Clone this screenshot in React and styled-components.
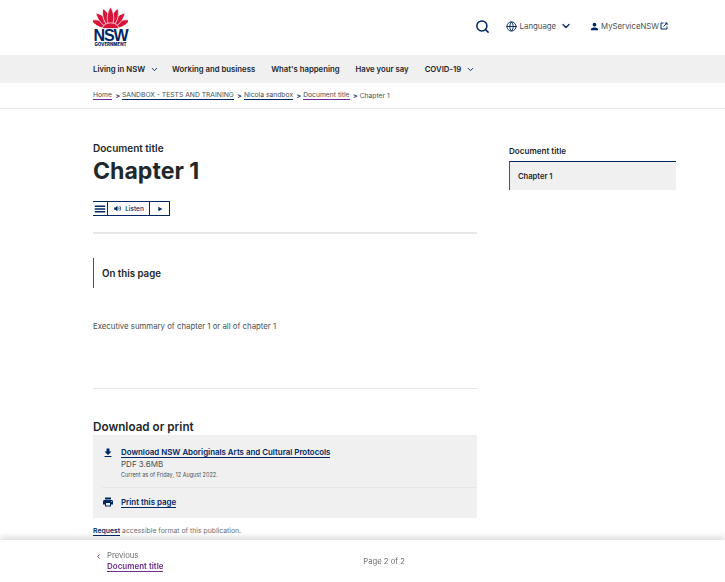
import React from 'react';
import styled, { createGlobalStyle } from 'styled-components';
import { Search, Globe, ChevronDown, ChevronLeft } from 'lucide-react';

const navy = '#002664';
const GlobalStyle = createGlobalStyle`
  html, body { margin: 0; padding: 0; height: 100%; overflow: hidden; background: #fff; }
  body { font-family: "Inter", "Liberation Sans", sans-serif; color: #22272b; }
  * { box-sizing: border-box; }
`;

const Page = styled.div`
  height: 582px;
  overflow: hidden;
`;

const Header = styled.header`
  height: 55px;
  padding: 6px 57px 0 93px;
  display: flex;
  justify-content: space-between;
`;

const Logo = styled.div`
  width: 35px;
  display: flex;
  flex-direction: column;
  align-items: center;
  color: ${navy};
`;

const LogoName = styled.span`
  font-family: "Liberation Sans", sans-serif;
  font-size: 16px;
  font-weight: 700;
  line-height: 13px;
  letter-spacing: -1.1px;
`;

const LogoGov = styled.span`
  font-size: 4.4px;
  font-weight: 800;
  line-height: 5px;
  white-space: nowrap;
`;

const Tools = styled.div`
  display: flex;
  align-items: center;
  height: 40px;
  color: ${navy};
  font-size: 7.8px;
`;

const ToolLabel = styled.span`
  color: #495054;
  margin-left: ${p => p.$gap || 3}px;
`;

const Language = styled.div`
  display: flex;
  align-items: center;
  margin-left: 16px;
  margin-right: 17px;
`;

const LanguageChevron = styled(ChevronDown)`
  margin-left: 4px;
`;

const Account = styled.div`
  display: flex;
  align-items: center;
`;

const ExternalSlot = styled.span`
  display: flex;
  margin-left: 1px;
`;

const Nav = styled.nav`
  height: 28px;
  background: #f0f0f0;
  padding-left: 93px;
  display: flex;
  align-items: center;
  gap: 16px;
`;

const NavItem = styled.a`
  display: flex;
  align-items: center;
  gap: 5px;
  font-size: 7.75px;
  font-weight: 600;
  color: #22272b;
  white-space: nowrap;
`;

const NavChevron = styled(ChevronDown)`
  margin-right: -3px;
`;

const Crumbs = styled.div`
  height: 26px;
  border-bottom: 1px solid #e8e8e8;
  padding-left: 93px;
  display: flex;
  align-items: center;
  font-size: 6.75px;
  color: #495054;
`;

const Crumb = styled.a`
  color: #495054;
  border-bottom: 1px solid ${p => (p.$visited ? '#6a2c91' : navy)};
  line-height: 8px;
  white-space: nowrap;
`;

const Sep = styled.span`
  margin: 0 2px 0 3.5px;
  color: ${navy};
  font-weight: 700;
`;

const Columns = styled.div`
  display: flex;
  padding-left: 93px;
  gap: 32px;
`;

const Main = styled.main`
  width: 384px;
  padding-top: 32px;
`;

const Eyebrow = styled.div`
  font-size: 10px;
  font-weight: 600;
  line-height: 14px;
`;

const Title = styled.h1`
  margin: 2px 0 0;
  font-size: 23.1px;
  font-weight: 700;
  line-height: 29px;
`;

const Player = styled.div`
  display: inline-flex;
  vertical-align: top;
  margin-top: 15px;
  height: 15px;
  border: 1px solid ${navy};
  border-left: 0;
  color: ${navy};
`;

const PlayerCell = styled.div`
  display: flex;
  align-items: center;
  justify-content: center;
  gap: 3px;
  width: ${p => p.$w}px;
  border-left: ${p => (p.$plain ? 0 : `1px solid ${navy}`)};
  font-size: 6.5px;
  font-weight: 500;
  color: ${navy};
`;

const Rule = styled.hr`
  margin: ${p => p.$m || '16px 0 0'};
  border: 0;
  height: ${p => p.$h || 2}px;
  background: #e8e8e8;
`;

const OnPage = styled.div`
  margin-top: 24px;
  height: 30px;
  border-left: 1px solid #d7153a;
  padding-left: 8px;
  display: flex;
  align-items: center;
  font-size: 9.7px;
  font-weight: 600;
`;

const Summary = styled.p`
  margin: 32px 0 0;
  font-size: 7.8px;
  line-height: 12px;
  color: #495054;
`;

const SectionTitle = styled.h2`
  margin: 31px 0 0;
  font-size: 11.7px;
  font-weight: 600;
  line-height: 15px;
`;

const DownloadBox = styled.div`
  height: 83px;
  background: #f0f0f0;
  padding: 13px 0 0 9px;
`;

const DownloadRow = styled.div`
  display: flex;
  gap: 7px;
  padding-bottom: 8px;
  border-bottom: ${p => (p.$line ? '1px solid #e6e6e6' : 0)};
  margin-bottom: 10px;
  color: ${navy};
`;

const IconSlot = styled.div`
  width: 12px;
  display: flex;
  justify-content: center;
  margin-top: ${p => p.$top}px;
`;

const BoxLink = styled.a`
  display: block;
  width: fit-content;
  font-size: 7.9px;
  font-weight: 600;
  color: ${navy};
  border-bottom: 1px solid ${navy};
  line-height: 9px;
  white-space: nowrap;
`;

const FileSize = styled.div`
  font-size: 8px;
  line-height: 10px;
  margin-top: 1px;
  color: #495054;
`;

const Stamp = styled.div`
  font-size: 5.5px;
  line-height: 8px;
  margin-top: 2px;
  color: #495054;
`;

const RequestLine = styled.p`
  margin: 8px 0 0;
  font-size: 6.85px;
  line-height: 9px;
  color: #6d6f72;
`;

const RequestLink = styled.a`
  font-weight: 600;
  color: ${navy};
  border-bottom: 1px solid ${navy};
`;

const Side = styled.aside`
  width: 167px;
  padding-top: 37px;
`;

const SideTitle = styled.div`
  font-size: 8.1px;
  font-weight: 600;
  line-height: 11px;
  margin-bottom: 4px;
`;

const SideItem = styled.div`
  height: 29px;
  background: #f0f0f0;
  border-top: 1px solid ${navy};
  border-left: 1px solid #d7153a;
  padding-left: 8px;
  display: flex;
  align-items: center;
  font-size: 7.6px;
  font-weight: 600;
`;

const Footer = styled.footer`
  position: fixed;
  left: 0;
  right: 0;
  bottom: 0;
  height: 42px;
  background: #fff;
  box-shadow: 0 -3px 6px rgba(0, 0, 0, 0.14);
  padding: 10px 320px 0 95px;
  display: flex;
  justify-content: space-between;
`;

const Prev = styled.div`
  font-size: 7.7px;
  line-height: 12px;
  color: #6d6f72;
`;

const PrevLabel = styled.div`
  display: flex;
  align-items: center;
  gap: 5px;
`;

const PrevLink = styled.a`
  display: block;
  width: fit-content;
  margin-left: 12px;
  font-size: 8px;
  font-weight: 600;
  color: #6a2c91;
  border-bottom: 1px solid #6a2c91;
  line-height: 9px;
`;

const PageCount = styled.div`
  font-size: 7.7px;
  color: #6d6f72;
  margin-top: 7px;
`;

const Solid = ({ d, size }) => (
  <svg width={size} height={size} viewBox="0 0 24 24" fill="currentColor"><path d={d} /></svg>
);

const icons = {
  download: 'M19 9h-4V3H9v6H5l7 7 7-7zM5 18v2h14v-2H5z',
  print: 'M19 8H5c-1.66 0-3 1.34-3 3v6h4v4h12v-4h4v-6c0-1.66-1.34-3-3-3zm-3 11H8v-5h8v5zm3-7c-.55 0-1-.45-1-1s.45-1 1-1 1 .45 1 1-.45 1-1 1zm-1-9H6v4h12V3z',
  menu: 'M3 18h18v-2.400H3V18zm0-4.800h18v-2.400H3v2.400zM3 6v2.400h18V6H3z',
  person: 'M12 12c2.210 0 4-1.790 4-4s-1.790-4-4-4-4 1.790-4 4 1.790 4 4 4zm0 2c-2.670 0-8 1.340-8 4v2h16v-2c0-2.660-5.330-4-8-4z',
  speaker: 'M3 9v6h4l5 5V4L7 9H3z',
  play: 'M7 5v14l12-7z',
};

const SpeakerWaves = () => (
  <svg width="9" height="9" viewBox="0 0 24 24" fill="none" stroke="currentColor" strokeWidth="2.4">
    <path d={icons.speaker} fill="currentColor" stroke="none" />
    <path d="M15 9c1.400 1.600 1.400 4.400 0 6M18 6c3 3.400 3 8.600 0 12" />
  </svg>
);

const ExternalBox = () => (
  <svg width="8" height="8" viewBox="0 0 8 8" fill="none" stroke="currentColor" strokeWidth="1">
    <path d="M3.500 1H1v6h6V4.500M3.500 4.500L7 1M4.800 1H7v2.200" />
  </svg>
);

const petalAngles = [-68, 68, -44, 44, -21, 21, 0];

const Waratah = () => (
  <svg width="35" height="23" viewBox="0 0 35 23">
    {petalAngles.map(a => (
      <path key={a} d="M17.500 22 C12.800 16 13.500 7 17.500 1 C21.500 7 22.200 16 17.500 22Z" fill="#d7153a" stroke="#fff" strokeWidth="0.7" transform={`rotate(${a} 17.500 22)`} />
    ))}
    <path d="M9 22.500 C11 15 24 15 26 22.500Z" fill="#d7153a" stroke="#fff" strokeWidth="0.7" />
  </svg>
);

const App = () => (
  <Page>
    <GlobalStyle />
    <Header>
      <Logo>
        <Waratah />
        <LogoName>NSW</LogoName>
        <LogoGov>GOVERNMENT</LogoGov>
      </Logo>
      <Tools>
        <Search size={15} strokeWidth={2.4} />
        <Language>
          <Globe size={11} />
          <ToolLabel>Language</ToolLabel>
          <LanguageChevron size={12} strokeWidth={2.5} />
        </Language>
        <Account>
          <Solid d={icons.person} size={11} />
          <ToolLabel $gap={1}>MyServiceNSW</ToolLabel>
          <ExternalSlot><ExternalBox /></ExternalSlot>
        </Account>
      </Tools>
    </Header>
    <Nav>
      <NavItem>Living in NSW <NavChevron size={9} color={navy} strokeWidth={2.5} /></NavItem>
      <NavItem>Working and business</NavItem>
      <NavItem>What's happening</NavItem>
      <NavItem>Have your say</NavItem>
      <NavItem>COVID-19 <NavChevron size={9} color={navy} strokeWidth={2.5} /></NavItem>
    </Nav>
    <Crumbs>
      <Crumb $visited>Home</Crumb><Sep>&gt;</Sep>
      <Crumb>SANDBOX - TESTS AND TRAINING</Crumb><Sep>&gt;</Sep>
      <Crumb>Nicola sandbox</Crumb><Sep>&gt;</Sep>
      <Crumb $visited>Document title</Crumb><Sep>&gt;</Sep>
      <span>Chapter 1</span>
    </Crumbs>
    <Columns>
      <Main>
        <Eyebrow>Document title</Eyebrow>
        <Title>Chapter 1</Title>
        <Player>
          <PlayerCell $w={14} $plain><Solid d={icons.menu} size={14} /></PlayerCell>
          <PlayerCell $w={42}><SpeakerWaves />Listen</PlayerCell>
          <PlayerCell $w={20}><Solid d={icons.play} size={8} /></PlayerCell>
        </Player>
        <Rule />
        <OnPage>On this page</OnPage>
        <Summary>Executive summary of chapter 1 or all of chapter 1</Summary>
        <Rule $m="56px 0 0" $h={1} />
        <SectionTitle>Download or print</SectionTitle>
        <DownloadBox>
          <DownloadRow $line>
            <IconSlot $top={-1}><Solid d={icons.download} size={12} /></IconSlot>
            <div>
              <BoxLink>Download NSW Aboriginals Arts and Cultural Protocols</BoxLink>
              <FileSize>PDF 3.6MB</FileSize>
              <Stamp>Current as of Friday, 12 August 2022.</Stamp>
            </div>
          </DownloadRow>
          <DownloadRow>
            <IconSlot $top={-3}><Solid d={icons.print} size={14} /></IconSlot>
            <div><BoxLink>Print this page</BoxLink></div>
          </DownloadRow>
        </DownloadBox>
        <RequestLine><RequestLink>Request</RequestLink> accessible format of this publication.</RequestLine>
      </Main>
      <Side>
        <SideTitle>Document title</SideTitle>
        <SideItem>Chapter 1</SideItem>
      </Side>
    </Columns>
    <Footer>
      <Prev>
        <PrevLabel><ChevronLeft size={7} color="#6a2c91" strokeWidth={3} />Previous</PrevLabel>
        <PrevLink>Document title</PrevLink>
      </Prev>
      <PageCount>Page 2 of 2</PageCount>
    </Footer>
  </Page>
);

export default App;
